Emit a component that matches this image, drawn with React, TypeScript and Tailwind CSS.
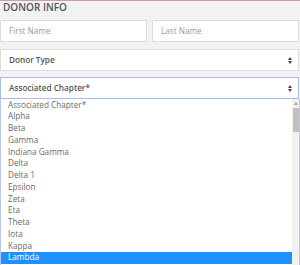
import React from 'react';

const chapters = [
  'Associated Chapter*',
  'Alpha',
  'Beta',
  'Gamma',
  'Indiana Gamma',
  'Delta',
  'Delta 1',
  'Epsilon',
  'Zeta',
  'Eta',
  'Theta',
  'Iota',
  'Kappa',
  'Lambda',
];

function SortArrows() {
  return (
    <svg width="4" height="7" viewBox="0 0 4 7" className="shrink-0">
      <polygon points="0,3 2,0 4,3" fill="#444" />
      <polygon points="0,4 2,7 4,4" fill="#444" />
    </svg>
  );
}

export default function App() {
  return (
    <div
      className="w-[300px] h-[265px] overflow-hidden bg-[#f2f2f2] border-t border-[#c99bbb] flex flex-col"
      style={{ fontFamily: '"Open Sans", "Liberation Sans", sans-serif' }}
    >
      {/* Section header */}
      <p className="px-[3px] text-[10px] leading-[12px] font-semibold text-[#555] uppercase">Donor Info</p>

      {/* Name fields */}
      <div className="mt-[7px] w-[299px] grid grid-cols-2 gap-[5px]">
        <div className="h-[22px] bg-white border border-[#dcdcdc] flex items-center pl-[8px] text-[8.2px] text-[#9a9a9a]">
          First Name
        </div>
        <div className="h-[22px] bg-white border border-[#dcdcdc] flex items-center pl-[8px] text-[8.2px] text-[#9a9a9a]">
          Last Name
        </div>
      </div>

      {/* Donor type */}
      <div className="mt-[7px] w-[299px] h-[22px] bg-white border border-[#dcdcdc] flex items-center justify-between pl-[8px] pr-[6px]">
        <span className="text-[8.2px] font-semibold text-[#555]">Donor Type</span>
        <SortArrows />
      </div>

      {/* Associated chapter (open) */}
      <div className="mt-[6px] w-[299px] h-[22px] bg-white border border-[#a9bce9] flex items-center justify-between pl-[8px] pr-[6px]">
        <span className="text-[8.2px] font-semibold text-[#555]">Associated Chapter*</span>
        <SortArrows />
      </div>

      {/* Dropdown list */}
      <div className="flex-1 flex bg-white border-l border-r border-[#b9c8ea] min-h-0">
        <ul className="flex-1 flex flex-col">
          {chapters.map((c) => (
            <li
              key={c}
              className={
                c === 'Lambda'
                  ? 'h-[11.75px] shrink-0 flex items-center pl-[7px] text-[8.2px] bg-[#1e90ff] text-white'
                  : 'h-[11.75px] shrink-0 flex items-center pl-[7px] text-[8.2px] text-[#6b6b6b]'
              }
            >
              {c}
            </li>
          ))}
        </ul>
        {/* Scrollbar */}
        <div className="w-[7px] bg-[#f1f1f1] flex flex-col items-center">
          <svg width="4" height="3" viewBox="0 0 4 3" className="mt-[3px]">
            <polygon points="0,3 2,0 4,3" fill="#a3a3a3" />
          </svg>
          <div className="mt-[3px] w-[6px] h-[24px] bg-[#c1c1c1]" />
        </div>
      </div>
    </div>
  );
}
